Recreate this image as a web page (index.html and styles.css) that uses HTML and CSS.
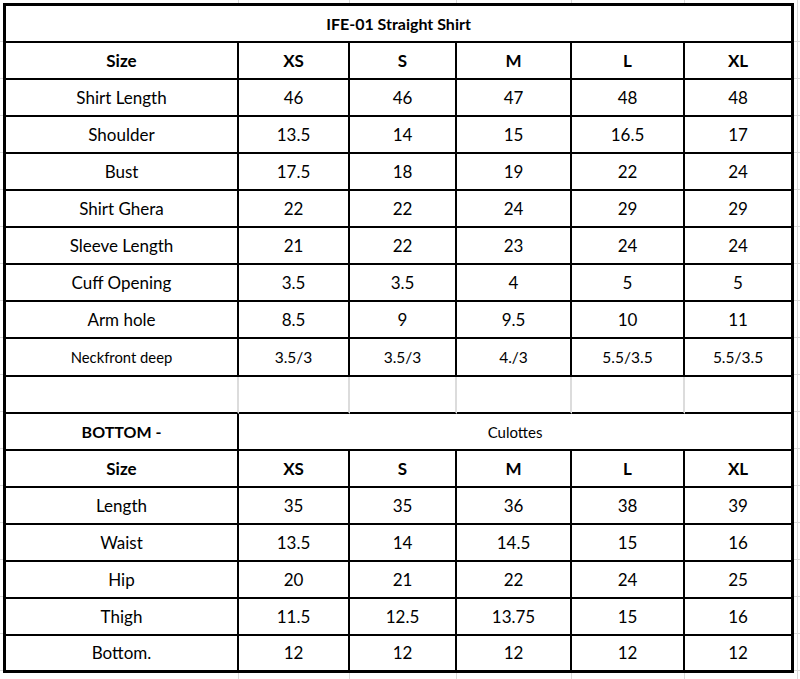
FILE: index.html
```html
<!DOCTYPE html>
<html lang="en">
<head>
<meta charset="utf-8">
<title>IFE-01 Straight Shirt – Size Chart</title>
<link rel="stylesheet" href="styles.css">
</head>
<body>
<div class="sheet">
  <table class="chart">
    <colgroup>
      <col class="c-label">
      <col class="c-xs">
      <col class="c-s">
      <col class="c-m">
      <col class="c-l">
      <col class="c-xl">
    </colgroup>
    <tbody>
      <tr class="row row-title">
        <td class="title" colspan="6">IFE-01 Straight Shirt</td>
      </tr>
      <tr class="row row-head">
        <td>Size</td><td>XS</td><td>S</td><td>M</td><td>L</td><td class="end">XL</td>
      </tr>
      <tr class="row">
        <td>Shirt Length</td><td>46</td><td>46</td><td>47</td><td>48</td><td class="end">48</td>
      </tr>
      <tr class="row">
        <td>Shoulder</td><td>13.5</td><td>14</td><td>15</td><td>16.5</td><td class="end">17</td>
      </tr>
      <tr class="row">
        <td>Bust</td><td>17.5</td><td>18</td><td>19</td><td>22</td><td class="end">24</td>
      </tr>
      <tr class="row">
        <td>Shirt Ghera</td><td>22</td><td>22</td><td>24</td><td>29</td><td class="end">29</td>
      </tr>
      <tr class="row">
        <td>Sleeve Length</td><td>21</td><td>22</td><td>23</td><td>24</td><td class="end">24</td>
      </tr>
      <tr class="row">
        <td>Cuff Opening</td><td>3.5</td><td>3.5</td><td>4</td><td>5</td><td class="end">5</td>
      </tr>
      <tr class="row">
        <td>Arm hole</td><td>8.5</td><td>9</td><td>9.5</td><td>10</td><td class="end">11</td>
      </tr>
      <tr class="row row-small row-tall">
        <td class="small-label">Neckfront deep</td><td>3.5/3</td><td>3.5/3</td><td>4./3</td><td>5.5/3.5</td><td class="end">5.5/3.5</td>
      </tr>
      <tr class="row row-blank">
        <td></td><td></td><td></td><td></td><td></td><td class="end"></td>
      </tr>
      <tr class="row">
        <td class="section">BOTTOM -</td>
        <td class="subtitle end" colspan="5">Culottes</td>
      </tr>
      <tr class="row row-head">
        <td>Size</td><td>XS</td><td>S</td><td>M</td><td>L</td><td class="end">XL</td>
      </tr>
      <tr class="row">
        <td>Length</td><td>35</td><td>35</td><td>36</td><td>38</td><td class="end">39</td>
      </tr>
      <tr class="row">
        <td>Waist</td><td>13.5</td><td>14</td><td>14.5</td><td>15</td><td class="end">16</td>
      </tr>
      <tr class="row">
        <td>Hip</td><td>20</td><td>21</td><td>22</td><td>24</td><td class="end">25</td>
      </tr>
      <tr class="row">
        <td>Thigh</td><td>11.5</td><td>12.5</td><td>13.75</td><td>15</td><td class="end">16</td>
      </tr>
      <tr class="row row-last">
        <td>Bottom.</td><td>12</td><td>12</td><td>12</td><td>12</td><td class="end">12</td>
      </tr>
    </tbody>
  </table>
</div>
</body>
</html>
```

FILE: styles.css
```css
html, body {
  margin: 0;
  padding: 0;
  background: #ffffff;
}

.sheet {
  width: 800px;
  height: 679px;
  padding: 3px 0 0 3px;
  box-sizing: border-box;
  overflow: hidden;
  background-color: #ffffff;
  background-image:
    repeating-linear-gradient(to bottom, transparent 0, transparent 36px, #dadada 36px, #dadada 37px),
    linear-gradient(#dadada, #dadada),
    linear-gradient(#dadada, #dadada),
    linear-gradient(#dadada, #dadada),
    linear-gradient(#dadada, #dadada),
    linear-gradient(#dadada, #dadada),
    linear-gradient(#dadada, #dadada);
  background-size: 100% 100%, 1px 100%, 1px 100%, 1px 100%, 1px 100%, 1px 100%, 1px 100%;
  background-position: 0 5px, 238px 0, 349px 0, 456px 0, 571px 0, 684px 0, 797px 0;
  background-repeat: repeat-y, no-repeat, no-repeat, no-repeat, no-repeat, no-repeat, no-repeat;
}

.chart {
  width: 791px;
  box-sizing: border-box;
  table-layout: fixed;
  border-collapse: separate;
  border-spacing: 0;
  border: 3px solid #000;
  background: #fff;
  font-family: "Lato", "Liberation Sans", sans-serif;
  color: #000;
}

.c-label { width: 233px; }
.c-xs { width: 111px; }
.c-s { width: 107px; }
.c-m { width: 115px; }
.c-l { width: 113px; }
.c-xl { width: 106px; }

.row { height: 37px; }
.row-tall { height: 38px; }
.row-last { height: 34px; }

.chart td {
  padding: 0;
  text-align: center;
  vertical-align: middle;
  font-size: 17px;
  line-height: 20px;
  white-space: nowrap;
  border-right: 2px solid #000;
  border-bottom: 2px solid #000;
}

.chart td.end { border-right: none; }
.chart .row-title td { border-right: none; }
.chart .row-last td { border-bottom: none; }

.chart .title {
  font-weight: 700;
  font-size: 16px;
}

.chart .row-head td {
  font-weight: 700;
  font-size: 17px;
}

.chart .row-small td {
  font-size: 15.5px;
}

.chart .row-small td.small-label {
  font-size: 14.8px;
}

.chart .row-blank td {
  border-right: 2px solid #dcdcdc;
}
.chart .row-blank td.end { border-right: none; }

.chart .section {
  font-weight: 700;
  font-size: 16px;
}

.chart .subtitle {
  font-size: 15px;
}
```
